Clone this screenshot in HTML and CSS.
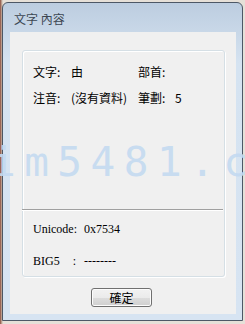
FILE: index.html
```html
<!DOCTYPE html>
<html>
<head>
<meta charset="utf-8">
<link rel="stylesheet" href="styles.css">
</head>
<body>
<div class="desk">
  <div class="window">
    <div class="titlebar">文字 內容</div>
    <div class="client">
      <div class="group">
        <div class="grid">
          <span>文字:</span><span>由</span><span>部首:</span><span></span>
          <span>注音:</span><span>(沒有資料)</span><span>筆劃:</span><span>5</span>
        </div>
        <div class="spacer"></div>
        <div class="sep"></div>
        <div class="codes">
          <div class="crow"><span class="clab">Unicode:</span><span>0x7534</span></div>
          <div class="crow"><span class="clab">BIG5<span class="colon">:</span></span><span>--------</span></div>
        </div>
      </div>
      <div class="btnrow"><button class="btn">確定</button></div>
    </div>
  </div>
  <div class="wmclip"><div class="watermark">im5481.co</div></div>
</div>
</body>
</html>
```
FILE: styles.css
```css
html, body {
  margin: 0;
  padding: 0;
}
body {
  width: 245px;
  height: 324px;
  overflow: hidden;
  background: #d9d2c9;
  font-family: "Noto Sans CJK TC", "Noto Sans", sans-serif;
  font-size: 12px;
  color: #000;
}
.desk {
  position: relative;
  width: 245px;
  height: 324px;
  padding: 2px 0 0 2px;
  box-sizing: border-box;
  background: linear-gradient(90deg, #8a4a3a 0, #c9b8a8 2px, #e6e0d8 3px);
}
.window {
  width: 241px;
  height: 319px;
  box-sizing: border-box;
  border: 1px solid #4d5866;
  border-radius: 6px 6px 0 0;
  background: linear-gradient(180deg, #bccde0 0, #c9d8e8 30px, #d5e3f1 60px, #d7e4f2 100%);
  padding: 0 6px 6px 7px;
  display: flex;
  flex-direction: column;
}
.titlebar {
  height: 29px;
  flex: none;
  display: flex;
  align-items: center;
  padding-left: 4px;
  padding-top: 1px;
  box-sizing: border-box;
  color: #3c4652;
  font-size: 12px;
}
.client {
  flex: 1;
  background: #f0f0f0;
  display: flex;
  flex-direction: column;
  padding: 18px 11px 0 12px;
}
.group {
  height: 227px;
  box-sizing: border-box;
  border: 1px solid #d5dfe5;
  border-radius: 3px;
  box-shadow: inset 1px 1px 0 #fff, 1px 1px 0 #fff;
  display: flex;
  flex-direction: column;
  padding: 12px 0 0 10px;
}
.grid {
  display: grid;
  grid-template-columns: 38px 67px 37px auto;
  row-gap: 8px;
  line-height: 18px;
}
.spacer {
  flex: 1;
}
.sep {
  height: 1px;
  background: #a0a0a0;
  border-bottom: 1px solid #fff;
  margin: 0 1px 0 -11px;
  flex: none;
}
.codes {
  height: 65px;
  flex: none;
  display: flex;
  flex-direction: column;
  font-family: "Liberation Serif", serif;
  font-size: 12px;
  padding-top: 11px;
  box-sizing: border-box;
  gap: 17px;
}
.crow {
  display: flex;
  line-height: 15px;
}
.clab {
  width: 51px;
  flex: none;
}
.colon {
  margin-left: 13px;
}
.btnrow {
  display: flex;
  padding: 11px 0 0 69px;
}
.btn {
  width: 61px;
  height: 19px;
  padding: 0;
  border: 1px solid #707070;
  border-radius: 3px;
  background: linear-gradient(180deg, #f2f2f2 0, #ebebeb 50%, #dddddd 51%, #cfcfcf 100%);
  box-shadow: inset 0 0 0 1px #fcfcfc;
  font-family: "Noto Sans CJK TC", sans-serif;
  font-size: 12px;
  line-height: 16px;
  color: #000;
}
.wmclip {
  position: absolute;
  left: 0;
  top: 137px;
  width: 245px;
  height: 50px;
  overflow: hidden;
  pointer-events: none;
}
.watermark {
  margin-left: -9px;
  font-family: "DejaVu Sans Mono", monospace;
  font-size: 41px;
  letter-spacing: 8.5px;
  color: #c4daf1;
  opacity: 0.9;
  white-space: nowrap;
  line-height: 50px;
}
```
